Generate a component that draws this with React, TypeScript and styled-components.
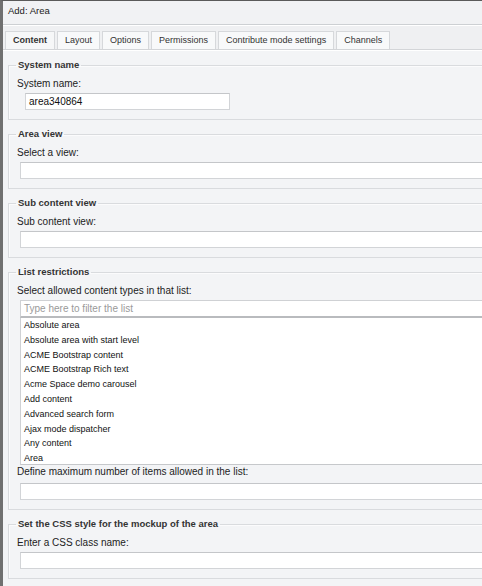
import styled, { createGlobalStyle } from "styled-components";

const GlobalStyle = createGlobalStyle`
  html, body {
    margin: 0;
    padding: 0;
    overflow: hidden;
    background: #f3f4f6;
  }
  body {
    font-family: "Liberation Sans", Arial, sans-serif;
    color: #222;
  }
`;

const Window = styled.div`
  width: 620px;
  height: 586px;
  box-sizing: border-box;
  border-left: 3px solid #707070;
  border-top: 1px solid #5a5a5a;
  background: #f3f4f6;
`;

const TitleBar = styled.div`
  height: 24px;
  padding: 3px 0 0 5px;
  box-sizing: border-box;
  font-size: 9.5px;
  line-height: 14px;
  color: #222;
  background: #f1f2f4;
  border-bottom: 1px solid #cdd0d3;
  box-shadow: 0 1px 0 #ffffff;
`;

const TabStrip = styled.div`
  display: flex;
  gap: 2px;
  padding: 5px 0 0 2px;
  margin-top: 1px;
  background: #eff0f2;
  border-bottom: 1px solid #d3d5d8;
`;

const Tab = styled.div<{ $active?: boolean }>`
  height: 17px;
  padding: 0 7px;
  border: 1px solid #d6d8db;
  border-bottom: none;
  background: ${({ $active }) => ($active ? "#f6f7f8" : "#f8f9fa")};
  font-size: 9px;
  font-weight: ${({ $active }) => ($active ? 700 : 400)};
  line-height: 17px;
  color: #333;
  white-space: nowrap;
`;

const Panel = styled.div`
  padding: 8px 0 0 5px;
  border-top: 1px solid #ffffff;
`;

const Fieldset = styled.fieldset`
  margin: 0 0 8px 0;
  padding: 0 0 9px 8px;
  border: 1px solid #d9dbde;
  box-shadow: inset 1px 1px 0 #fbfbfc;
  min-width: 0;
`;

const Legend = styled.legend`
  padding: 0 2px;
  margin-left: -1px;
  font-size: 9.5px;
  font-weight: 700;
  line-height: 12px;
  color: #333;
`;

const Label = styled.div<{ $tight?: boolean }>`
  margin-top: ${({ $tight }) => ($tight ? "1px" : "7px")};
  font-size: 10px;
  line-height: 12px;
  color: #222;
`;

const TextInput = styled.div<{ $short?: boolean; $gap?: number }>`
  margin: ${({ $gap }) => $gap ?? 3}px 0 0 ${({ $short }) => ($short ? "8px" : "3px")};
  width: ${({ $short }) => ($short ? "205px" : "auto")};
  height: 17px;
  box-sizing: border-box;
  padding: 0 0 0 3px;
  background: #ffffff;
  border: 1px solid #d2d4d7;
  border-top-color: #c4c6c9;
  font-size: 10px;
  line-height: 15px;
  color: #111;
`;

const Filter = styled.div`
  margin: 3px 0 0 3px;
  height: 18px;
  box-sizing: border-box;
  padding-left: 3px;
  background: #ffffff;
  border: 1px solid #cfd1d4;
  border-bottom: 2px solid #b9bbbe;
  font-size: 10px;
  line-height: 15px;
  color: #9a9a9a;
`;

const List = styled.ul`
  list-style: none;
  margin: 0 0 0 3px;
  padding: 0;
  height: 146px;
  overflow: hidden;
  background: #ffffff;
  border: 1px solid #cfd1d4;
  border-top: none;
  border-bottom-color: #c6c8cb;
`;

const Item = styled.li`
  padding-left: 3px;
  font-size: 9px;
  line-height: 14.8px;
  color: #111;
  white-space: nowrap;
`;

const tabs = [
  "Content",
  "Layout",
  "Options",
  "Permissions",
  "Contribute mode settings",
  "Channels",
];

const contentTypes = [
  "Absolute area",
  "Absolute area with start level",
  "ACME Bootstrap content",
  "ACME Bootstrap Rich text",
  "Acme Space demo carousel",
  "Add content",
  "Advanced search form",
  "Ajax mode dispatcher",
  "Any content",
  "Area",
];

export default function App() {
  return (
    <>
      <GlobalStyle />
      <Window>
        <TitleBar>Add: Area</TitleBar>
        <TabStrip>
          {tabs.map((t, i) => (
            <Tab key={t} $active={i === 0}>
              {t}
            </Tab>
          ))}
        </TabStrip>
        <Panel>
          <Fieldset>
            <Legend>System name</Legend>
            <Label>System name:</Label>
            <TextInput $short>area340864</TextInput>
          </Fieldset>

          <Fieldset>
            <Legend>Area view</Legend>
            <Label>Select a view:</Label>
            <TextInput />
          </Fieldset>

          <Fieldset>
            <Legend>Sub content view</Legend>
            <Label>Sub content view:</Label>
            <TextInput />
          </Fieldset>

          <Fieldset>
            <Legend>List restrictions</Legend>
            <Label>Select allowed content types in that list:</Label>
            <Filter>Type here to filter the list</Filter>
            <List>
              {contentTypes.map((c) => (
                <Item key={c}>{c}</Item>
              ))}
            </List>
            <Label $tight>Define maximum number of items allowed in the list:</Label>
            <TextInput $gap={5} />
          </Fieldset>

          <Fieldset>
            <Legend>Set the CSS style for the mockup of the area</Legend>
            <Label>Enter a CSS class name:</Label>
            <TextInput />
          </Fieldset>
        </Panel>
      </Window>
    </>
  );
}
